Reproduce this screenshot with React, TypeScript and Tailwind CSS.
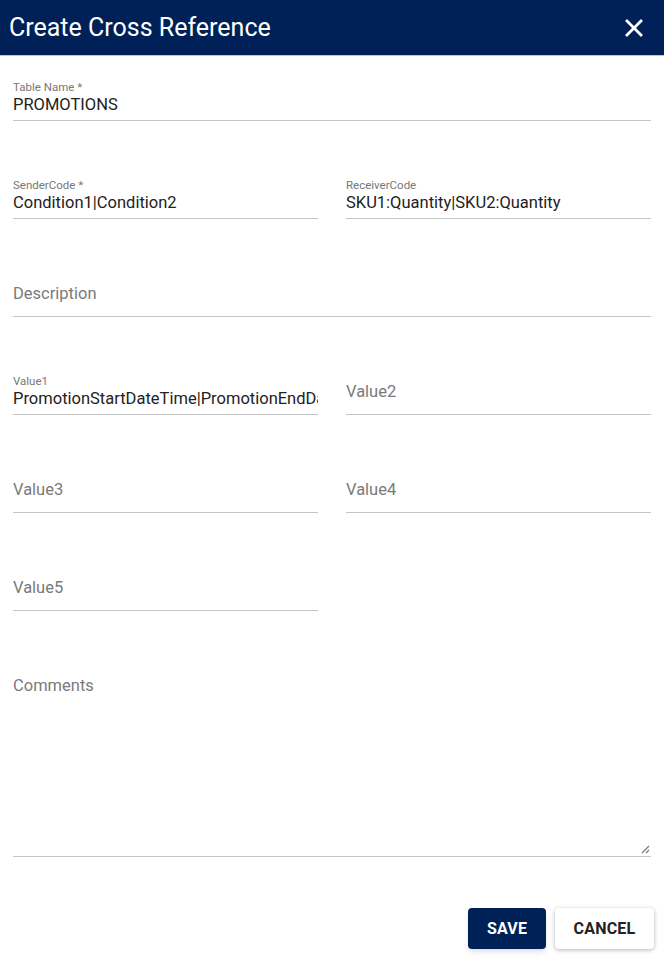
import React from 'react';

const font = { fontFamily: 'Roboto, "Liberation Sans", sans-serif' };

interface FieldProps {
  label: string;
  value?: string;
  className?: string;
}

const Field: React.FC<FieldProps> = ({ label, value, className = '' }) => {
  return (
    <div className={`flex min-w-0 flex-col justify-end ${className}`}>
      {value ? (
        <div className="flex flex-col border-b border-[#c4c4c4] pb-[5px]">
          <span className="text-[11.5px] leading-[13px] text-[#777]">{label}</span>
          <input
            readOnly
            value={value}
            className="mt-[1px] h-[20px] w-full min-w-0 bg-transparent p-0 text-[16.5px] leading-[20px] text-[#222] outline-none"
            style={font}
          />
        </div>
      ) : (
        <div className="flex flex-col border-b border-[#c4c4c4] pb-[12px]">
          <span className="text-[16.5px] leading-[20px] text-[#7a7a7a]">{label}</span>
        </div>
      )}
    </div>
  );
};

export default function App() {
  return (
    <div className="flex h-[958px] w-[664px] flex-col bg-white" style={font}>
      <div className="flex h-[56px] shrink-0 items-center justify-between border-b border-[#b9c6d8] bg-[#002157] pl-[9px] pr-[20px]">
        <h1 className="text-[25px] font-normal leading-none text-white">Create Cross Reference</h1>
        <svg width="20" height="20" viewBox="0 0 20 20" className="text-white">
          <path d="M3 3 L17 17 M17 3 L3 17" stroke="currentColor" strokeWidth="2.8" strokeLinecap="square" />
        </svg>
      </div>

      <div className="flex flex-col px-[13px]">
        <Field label="Table Name *" value="PROMOTIONS" className="h-[65px]" />
        <div className="grid h-[98px] grid-cols-2 gap-x-[28px]">
          <Field label="SenderCode *" value="Condition1|Condition2" />
          <Field label="ReceiverCode" value="SKU1:Quantity|SKU2:Quantity" />
        </div>
        <Field label="Description" className="h-[98px]" />
        <div className="grid h-[98px] grid-cols-2 gap-x-[28px]">
          <Field label="Value1" value="PromotionStartDateTime|PromotionEndDateTime" />
          <Field label="Value2" />
        </div>
        <div className="grid h-[98px] grid-cols-2 gap-x-[28px]">
          <Field label="Value3" />
          <Field label="Value4" />
        </div>
        <div className="grid h-[98px] grid-cols-2 gap-x-[28px]">
          <Field label="Value5" />
          <div />
        </div>
        <div className="relative mt-[65px] flex h-[181px] flex-col border-b border-[#c4c4c4]">
          <span className="text-[16.5px] leading-[20px] text-[#7a7a7a]">Comments</span>
          <svg width="10" height="10" viewBox="0 0 10 10" className="absolute bottom-[2px] right-[1px]">
            <path d="M9 2 L2 9 M9 6 L6 9" stroke="#777" strokeWidth="1.2" />
          </svg>
        </div>
      </div>

      <div className="mt-[51px] flex justify-end gap-[9px] pr-[10px]">
        <button className="h-[41px] w-[78px] rounded-[4px] bg-[#002157] text-[16px] font-bold tracking-[0.2px] text-white shadow-md">
          SAVE
        </button>
        <button className="h-[41px] w-[99px] rounded-[4px] bg-white text-[16px] font-bold tracking-[0.2px] text-[#222] shadow-[0_1px_4px_rgba(0,0,0,0.3)]">
          CANCEL
        </button>
      </div>
    </div>
  );
}
